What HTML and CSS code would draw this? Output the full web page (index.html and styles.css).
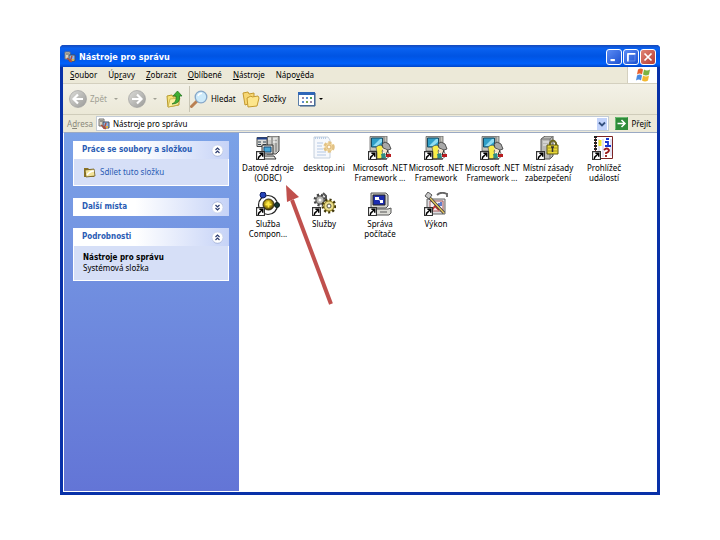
FILE: index.html
```html
<!DOCTYPE html>
<html lang="cs">
  <head>
    <meta charset="UTF-8">
    <meta name="viewport" content="width=device-width, initial-scale=1">
    <title>Nástroje pro správu</title>
    <link rel="stylesheet" href="styles.css">
  </head>
  <body>

    <!-- shared icons -->
    <svg class="defs" width="0" height="0" aria-hidden="true">
      <defs>
        <linearGradient id="gray" x1="0" y1="0" x2="1" y2="1">
          <stop offset="0" stop-color="#dcdcd8"/><stop offset="1" stop-color="#9a9a98"/>
        </linearGradient>
        <radialGradient id="gold" cx=".45" cy=".4" r=".6">
          <stop offset="0" stop-color="#fff45c"/><stop offset=".5" stop-color="#b59a10"/><stop offset="1" stop-color="#3a3208"/>
        </radialGradient>
        <symbol id="shortcut" viewBox="0 0 8 8">
          <path d="M.5 .5h7v7h-7z" fill="#fff" stroke="#333"/>
          <path d="M3 2h3v3M6 2L4 4Q2 5 2 7" fill="none" stroke="#000" stroke-width="1.3"/>
        </symbol>
        <symbol id="tools" viewBox="0 0 12 12">
          <path d="M1 1h5v7H1z" fill="#d8d4c4" stroke="#777"/>
          <path d="M2 3h3" stroke="#555"/>
          <path d="M5 4h6v6H5z" fill="#8fb4e8" stroke="#45505f"/>
          <path d="M3 7l5 4M8 5l-2 6" stroke="#b0503c" stroke-width="1.5"/>
          <path d="M8 8h2v2H8z" fill="#e4b23a"/>
        </symbol>
        <symbol id="net" viewBox="0 0 24 24">
          <path d="M2 .5h14l3-.5v13l-3 2H2z" fill="#c4c4bc" stroke="#555" stroke-width=".7"/>
          <path d="M16 1v13" stroke="#777"/>
          <path d="M3.500 2h11v9h-11z" fill="#2f9fc8" stroke="#174b62"/>
          <path d="M5 10l7-7h2v3l-5 4z" fill="#8fdcf2"/>
          <path d="M9 15h11l2 5-4 3H8z" fill="#fff" stroke="#333" stroke-width=".7"/>
          <path d="M8 11q5-4 8 1l-2 3 1 4-2 4H9V17z" fill="#f8ec48" stroke="#555" stroke-width=".7"/>
          <path d="M14 8l3-2 4 2 2 5-3 1-5-2z" fill="#a8a8a8" stroke="#333" stroke-width=".8"/>
          <path d="M14 12l5 2 1 4-4-1z" fill="#f6e4cc"/>
          <path d="M13 18l4-1 1 5-4 1z" fill="#2f8c84"/>
          <path d="M18 18h5v3h-5z" fill="#b81c20"/>
          <path d="M20 14l-2 5M9 23h10" stroke="#222"/>
          <use href="#shortcut" x="0" y="15" width="9" height="9"/>
        </symbol>
        <symbol id="chevrons" viewBox="0 0 13 13">
          <circle cx="6.500" cy="7" r="5.500" fill="#8b9cc8"/>
          <circle cx="6.500" cy="6.500" r="5.500" fill="#fff" stroke="#c4cfe8" stroke-width=".6"/>
          <path d="M4.500 6l2-2 2 2M4.500 9l2-2 2 2" fill="none" stroke="#2c3c70" stroke-width="1.200"/>
        </symbol>
      </defs>
    </svg>

    <main class="window">
      <header class="titlebar">
        <svg class="small-icon"><use href="#tools"/></svg>
        <h1>Nástroje pro správu</h1>
        <div class="controls">
          <button class="control" aria-label="Minimalizovat"><svg viewBox="0 0 16 16"><path d="M4 11.500h5" stroke="#fff" stroke-width="2.500"/></svg></button>
          <button class="control" aria-label="Maximalizovat"><svg viewBox="0 0 16 16"><path d="M4.500 13V4M4 4.500h9" fill="none" stroke="#fff" stroke-width="2"/><path d="M12.500 5v7.500H5" fill="none" stroke="#7ba0ee" stroke-width=".7"/></svg></button>
          <button class="control close" aria-label="Zavřít"><svg viewBox="0 0 16 16"><path d="M4 4l8 8M12 4l-8 8" stroke="#fff" stroke-width="2"/></svg></button>
        </div>
      </header>

      <nav class="menubar">
        <button><u>S</u>oubor</button>
        <button>Úp<u>r</u>avy</button>
        <button><u>Z</u>obrazit</button>
        <button><u>O</u>blíbené</button>
        <button><u>N</u>ástroje</button>
        <button>Nápo<u>v</u>ěda</button>
        <span class="flag">
          <svg viewBox="0 0 16 15">
            <path d="M3 2q3-2 5 0L7 7Q5 5 2 7z" fill="#e8602c"/>
            <path d="M9 2q3 2 6 0l-1 5q-3 2-6 0z" fill="#7cb342"/>
            <path d="M2 8q3-2 5 0l-1 5q-2-2-5 0z" fill="#4a8ae0"/>
            <path d="M8 8q3 2 6 0l-1 5q-3 2-6 0z" fill="#f2b830"/>
          </svg>
        </span>
      </nav>

      <div class="toolbar">
        <button class="back" disabled>
          <svg viewBox="0 0 18 18"><circle cx="9" cy="9" r="8.500" fill="url(#gray)" stroke="#999" stroke-width=".6"/><path d="M14 9H5M9 4.500L4.500 9 9 13.500" fill="none" stroke="#fff" stroke-width="2.200"/></svg>
          Zpět <i class="drop"></i>
        </button>
        <button class="forward" disabled aria-label="Vpřed">
          <svg viewBox="0 0 18 18"><circle cx="9" cy="9" r="8.500" fill="url(#gray)" stroke="#999" stroke-width=".6"/><path d="M4 9h9M9 4.500L13.500 9 9 13.500" fill="none" stroke="#fff" stroke-width="2.200"/></svg>
          <i class="drop"></i>
        </button>
        <button class="up" aria-label="Nahoru">
          <svg viewBox="0 0 18 18"><path d="M2 6l5-1 1 2 6-1v9L3 17z" fill="#f5e27a" stroke="#b79a2c"/><path d="M3 17l2-8 10-1-2 7z" fill="#fbf0a0" stroke="#c0a43c" stroke-width=".7"/><path d="M7 14q5-2 4-8H8l4.500-5L17 6h-2.500q1 8-7.500 8z" fill="#3fae32" stroke="#20701c" stroke-width=".7"/></svg>
        </button>
        <span class="divider"></span>
        <button class="search">
          <svg viewBox="0 0 18 18"><path d="M1.500 16.500L7 11" stroke="#b98052" stroke-width="3" stroke-linecap="round"/><circle cx="11" cy="7" r="5.800" fill="#cdeafa" stroke="#86a7c8" stroke-width="1.300"/><path d="M8 6q1-3 4-2.500" fill="none" stroke="#fff" stroke-width="1.500"/></svg>
          Hledat
        </button>
        <button class="folders">
          <svg viewBox="0 0 18 18"><path d="M1 3l5-1 1 2 5-1v9l-9 3z" fill="#f7d774" stroke="#c49a30"/><path d="M5 8l4-2 1 1 6-1 1 2-2 8-9 1z" fill="#fde68c" stroke="#c49a30"/></svg>
          Složky
        </button>
        <button class="views" aria-label="Zobrazení">
          <svg viewBox="0 0 18 16"><path d="M.5 1.500h16v13H.5z" fill="#fff" stroke="#5b7ea8"/><path d="M0 1h17v3H0z" fill="#2f66b8"/><path d="M17 2v13H2" fill="none" stroke="#355b88"/><path d="M4 6h2v2H4zM12 10h2v2h-2z" fill="#9c8aa8"/><path d="M8 6h2v2H8zM4 10h2v2H4z" fill="#5d8ed0"/><path d="M12 6h2v2h-2z" fill="#4b9e55"/><path d="M8 10h2v2H8z" fill="#7ba650"/></svg>
          <i class="drop"></i>
        </button>
      </div>

      <form class="address">
        <label for="path">A<u>d</u>resa</label>
        <div class="path-box">
          <svg class="small-icon"><use href="#tools"/></svg>
          <input id="path" type="text" value="Nástroje pro správu">
          <button type="button" class="pick" aria-label="Otevřít seznam"><svg viewBox="0 0 10 12"><path d="M2 4.500L5 7.500l3-3" fill="none" stroke="#34507e" stroke-width="1.800"/></svg></button>
        </div>
        <button type="button" class="go">
          <svg viewBox="0 0 13 13"><path d="M0 0h13v13H0z" fill="#2f8c3a"/><path d="M.5 12.500V.5h12" fill="none" stroke="#6fbc74"/><path d="M2.500 6.500h7M6.500 3l3.500 3.500L6.500 10" fill="none" stroke="#fff" stroke-width="1.500"/></svg>
          Přejít
        </button>
      </form>

      <div class="content">
        <aside class="sidebar">
          <section class="panel">
            <div class="panel-head">
              <h2>Práce se soubory a složkou</h2>
              <button aria-label="Sbalit"><svg><use href="#chevrons"/></svg></button>
            </div>
            <div class="panel-body tasks">
              <a href="#">
                <svg viewBox="0 0 13 12"><path d="M1 2h4l1 1h5v8H1z" fill="#8c7424"/><path d="M2 4l9-1 1 7-9 1z" fill="#f2e39a" stroke="#6d5a1e" stroke-width=".8"/><path d="M4 9q3-4 7-4" stroke="#fff" stroke-width="1.500" fill="none"/></svg>
                Sdílet tuto složku
              </a>
            </div>
          </section>

          <section class="panel">
            <div class="panel-head">
              <h2>Další místa</h2>
              <button class="flip" aria-label="Rozbalit"><svg><use href="#chevrons"/></svg></button>
            </div>
          </section>

          <section class="panel">
            <div class="panel-head">
              <h2>Podrobnosti</h2>
              <button aria-label="Sbalit"><svg><use href="#chevrons"/></svg></button>
            </div>
            <div class="panel-body">
              <strong>Nástroje pro správu</strong>
              <p>Systémová složka</p>
            </div>
          </section>
        </aside>

        <section class="files">
          <a class="file" href="#">
            <svg viewBox="0 0 24 24">
              <path d="M11 1l3-1h9v15l-3 3h-9z" fill="#c9c9c5" stroke="#444"/>
              <path d="M16 1v15M20 3v13" stroke="#777"/>
              <path d="M12 3h3M17 3h4M17 6h4" stroke="#fff"/>
              <path d="M1 1.500h10v9H1z" fill="#dcdcd8" stroke="#444"/>
              <path d="M1 2.500h10" stroke="#20408c" stroke-width="2"/><path d="M2 6h3M7 6h3M2 8.500h3M7 8.500h3" stroke="#345"/>
              <path d="M6 9h11v9H6z" fill="#d8d8d4" stroke="#333"/>
              <path d="M8 11h7v5H8z" fill="#46a8d8" stroke="#164a78"/>
              <path d="M7 20h11l2 3H7z" fill="#e8e8e4" stroke="#333"/>
              <use href="#shortcut" x="0" y="15" width="9" height="9"/>
            </svg>
            <span>Datové zdroje (ODBC)</span>
          </a>
          <a class="file" href="#">
            <svg viewBox="0 0 24 24">
              <path d="M2 1h14l2 3v18H2z" fill="#f6f8fc" stroke="#b8c4d4" stroke-width=".8"/>
              <path d="M3 2h12" stroke="#b8cce4" stroke-width="2" stroke-dasharray="1 1"/>
              <path d="M5 7h6M5 10h5M5 13h6M5 16h9M5 19h9" stroke="#b4c8e4"/>
              <circle cx="17" cy="11" r="4.500" fill="#f3d9a2" stroke="#e2c284" stroke-width="2.500" stroke-dasharray="3 2"/>
              <circle cx="17" cy="11" r="2" fill="#fff8e8" stroke="#d8b070"/>
            </svg>
            <span>desktop.ini</span>
          </a>
          <a class="file" href="#">
            <svg><use href="#net"/></svg>
            <span>Microsoft .NET Framework ...</span>
          </a>
          <a class="file" href="#">
            <svg><use href="#net"/></svg>
            <span>Microsoft .NET Framework</span>
          </a>
          <a class="file" href="#">
            <svg><use href="#net"/></svg>
            <span>Microsoft .NET Framework ...</span>
          </a>
          <a class="file" href="#">
            <svg viewBox="0 0 24 24">
              <path d="M5 3l4-3h8v20l-3 3H5z" fill="#b9b9b5" stroke="#555"/>
              <path d="M5 3h9v20M14 3l3-3" fill="none" stroke="#777"/>
              <path d="M7 6h6M7 9h6" stroke="#eee"/>
              <path d="M14 10V7q3-5 6 0v3" fill="none" stroke="#6c6620" stroke-width="2"/>
              <path d="M11 9h11v9H11z" fill="#e8d838" stroke="#5a5410"/>
              <path d="M12 12h10M12 15h10" stroke="#a89820"/><path d="M15 11h3M16.500 11v5" stroke="#333" stroke-width="1.500"/>
              <use href="#shortcut" x="0" y="15" width="9" height="9"/>
            </svg>
            <span>Místní zásady zabezpečení</span>
          </a>
          <a class="file" href="#">
            <svg viewBox="0 0 24 24">
              <path d="M3.500 .5h17v22h-17z" fill="#fff" stroke="#7c2424"/>
              <path d="M3.500 0v24" stroke="#222" stroke-width="3" stroke-dasharray="2 1"/>
              <path d="M7 3v16M11 3v18M19 3v17" stroke="#c8c8e8"/>
              <path d="M8 4v6" stroke="#f0e428" stroke-width="3"/>
              <path d="M14 3h3M13 6h3v4M13 10h6" fill="none" stroke="#1838d0" stroke-width="1.800"/>
              <path d="M12 14q3-3 5 0 0 2-3 3v1M14 19v2" fill="none" stroke="#981818" stroke-width="1.800"/>
              <use href="#shortcut" x="0" y="15" width="9" height="9"/>
            </svg>
            <span>Prohlížeč událostí</span>
          </a>
          <a class="file" href="#">
            <svg viewBox="0 0 24 24">
              <circle cx="12" cy="13" r="9.500" fill="#fff" stroke="#222" stroke-width="1.200"/>
              <circle cx="12.500" cy="12.500" r="5.500" fill="url(#gold)" stroke="#332c0c"/>
              <path d="M12.500 9.500v6M9.500 12.500h6" stroke="#ffe840" stroke-width="1.500"/>
              <circle cx="7" cy="3" r="3" fill="#2444b8" stroke="#101c60"/>
              <circle cx="21" cy="13" r="2.500" fill="#163830" stroke="#0c1c18"/>
              <use href="#shortcut" x="0" y="15" width="9" height="9"/>
            </svg>
            <span>Služba Compon...</span>
          </a>
          <a class="file" href="#">
            <svg viewBox="0 0 24 24">
              <circle cx="8" cy="8" r="5" fill="#a8a8a4" stroke="#444" stroke-width="3" stroke-dasharray="2 2"/>
              <circle cx="8" cy="8" r="4" fill="#b8b8b4" stroke="#666"/><circle cx="8" cy="8" r="1.500" fill="#fff"/>
              <path d="M11 1l3 3v4" fill="none" stroke="#555" stroke-width="2"/>
              <circle cx="17" cy="14" r="6" fill="#eee08a" stroke="#40380c" stroke-width="3" stroke-dasharray="2 2"/>
              <circle cx="17" cy="14" r="5" fill="#e9dc8c" stroke="#8c7c24"/><circle cx="17" cy="14" r="2" fill="#fff" stroke="#554"/>
              <use href="#shortcut" x="0" y="15" width="9" height="9"/>
            </svg>
            <span>Služby</span>
          </a>
          <a class="file" href="#">
            <svg viewBox="0 0 24 24">
              <path d="M3 1h15l2 2v11l-2 2H3z" fill="#d2d2cc" stroke="#555"/>
              <path d="M5 3h12v10H5z" fill="#1c2cb0" stroke="#222"/>
              <path d="M7 5h4v3H7zM12 8h3v3h-3z" fill="#fff"/><path d="M10 7l3 2" stroke="#fff"/>
              <path d="M2 17h18l3-1v5l-2 2H2z" fill="#dcdcd6" stroke="#555"/><path d="M12 20h7" stroke="#555"/>
              <use href="#shortcut" x="0" y="15" width="9" height="9"/>
            </svg>
            <span>Správa počítače</span>
          </a>
          <a class="file" href="#">
            <svg viewBox="0 0 24 24">
              <path d="M3 7h18v15H3z" fill="#dcdce0" stroke="#666"/>
              <path d="M6 9h13v10H6z" fill="#f6eef2" stroke="#a85858"/>
              <path d="M15 17V11M17 14v-4" stroke="#3058c0" stroke-width="1.500"/>
              <path d="M8 18l3-4 4 4" fill="none" stroke="#c03030" stroke-width="1.800"/>
              <path d="M3 3l17 18" stroke="#333" stroke-width="3"/><path d="M6 6l14 15" stroke="#e8c860" stroke-width="1.500"/>
              <path d="M1 4l3-4 4 3-3 4z" fill="#c8c8c8" stroke="#555"/>
              <path d="M13 3q4-4 10-1M23 1v4" fill="none" stroke="#666" stroke-width="1.800"/>
              <use href="#shortcut" x="0" y="15" width="9" height="9"/>
            </svg>
            <span>Výkon</span>
          </a>

          <svg class="pointer" viewBox="0 0 52 124" aria-hidden="true">
            <path d="M47 121L8 17" stroke="#c0504d" stroke-width="4"/>
            <path d="M2 2l13 12-12 5z" fill="#c0504d"/>
          </svg>
        </section>
      </div>
    </main>
  </body>
</html>
```
FILE: styles.css
```css
* {
  margin: 0;
  padding: 0;
  box-sizing: border-box;
}

body {
  min-height: 100vh;
  display: flex;
  padding: 45px 60px;
  background: #fff;
  color: #000;
  font-family: "Noto Sans", "DejaVu Sans", sans-serif;
  font-size: 8px;
  line-height: 10px;
}

button,
input {
  font: inherit;
  color: inherit;
  border: none;
  background: none;
}

button {
  display: flex;
  align-items: center;
}

a {
  color: inherit;
  text-decoration: none;
}

.defs {
  position: absolute;
}

.small-icon {
  width: 12px;
  height: 12px;
  flex: none;
}

.window {
  flex: 1;
  display: flex;
  flex-direction: column;
  border: 3px solid #0831a8;
  border-top: none;
  border-radius: 4px 4px 0 0;
  background: #ece9d8;
}

/* title bar */
.titlebar {
  display: flex;
  align-items: center;
  gap: 3px;
  height: 22px;
  margin: 0 -3px;
  padding: 3px 4px 2px;
  border-radius: 4px 4px 0 0;
  background: linear-gradient(#1648b8, #0a62f0 15%, #0054e3 50%, #0060fa 85%, #0044c8);
  color: #fff;
}

h1 {
  flex: 1;
  font-family: "DejaVu Sans Condensed", "DejaVu Sans", sans-serif;
  font-size: 9px;
  line-height: 12px;
}

.controls {
  display: flex;
  gap: 1px;
}

.control {
  width: 16px;
  height: 16px;
  border: 1px solid #fff;
  border-radius: 3px;
  background: linear-gradient(135deg, #5c8cf4, #1c50d0);
}

.control svg {
  width: 14px;
  height: 14px;
}

.close {
  background: linear-gradient(135deg, #e08474, #b83c34);
}

/* menu */
.menubar {
  display: flex;
  align-items: center;
  gap: 11px;
  height: 17px;
  padding-left: 7px;
  border-bottom: 1px solid #d4d0bf;
}

.flag {
  display: flex;
  justify-content: center;
  align-self: stretch;
  width: 30px;
  margin-left: auto;
  border-left: 1px solid #d4d0bf;
  background: #fff;
}

.flag svg {
  width: 16px;
  height: 16px;
}

/* toolbar */
.toolbar {
  display: flex;
  align-items: center;
  gap: 8px;
  height: 31px;
  padding-left: 6px;
  border-bottom: 1px solid #cfccba;
  background: linear-gradient(#f3f1e7, #ebe8d7);
}

.toolbar button {
  gap: 3px;
}

.toolbar svg {
  width: 18px;
  height: 18px;
}

.toolbar button:disabled {
  color: #a09f94;
}

.toolbar .back {
  margin-right: 2px;
}

.drop {
  width: 0;
  margin-left: 4px;
  border: 2px solid transparent;
  border-top-color: currentColor;
  border-bottom: none;
}

.views .drop {
  margin-left: 0;
}

.divider {
  height: 26px;
  border-left: 1px solid #c8c5b4;
  margin: 0 -8px 0 -2px;
}

.toolbar .search {
  margin-right: -2px;
}

.toolbar .views {
  margin-left: 4px;
}

/* address bar */
.address {
  display: flex;
  align-items: center;
  gap: 6px;
  height: 17px;
  padding: 1px 6px 1px 4px;
}

.address label {
  color: #8b897c;
}

.path-box {
  flex: 1;
  display: flex;
  align-items: center;
  gap: 3px;
  height: 15px;
  margin-left: -3px;
  padding: 0 1px;
  border: 1px solid #c3ccd6;
  background: #fff;
}

.path-box input {
  flex: 1;
  min-width: 0;
  height: 12px;
}

.pick {
  width: 10px;
  height: 12px;
  background: #c2d3fb;
}

.go {
  gap: 3px;
}

.go svg {
  width: 13px;
  height: 13px;
}

/* content */
.content {
  flex: 1;
  display: flex;
  border: 1px solid #fff;
  border-top-color: #9aa9c4;
  border-right: none;
  background: #fff;
}

.sidebar {
  width: 175px;
  padding: 8px 10px 8px 9px;
  background: linear-gradient(#7ba2e7, #6375d6);
}

.panel {
  margin-bottom: 12px;
}

.panel-head {
  display: flex;
  align-items: center;
  justify-content: space-between;
  height: 18px;
  padding: 0 5px 0 9px;
  background: linear-gradient(90deg, #fff 40%, #c6d3f7);
}

.panel-head svg {
  width: 13px;
  height: 13px;
}

.flip svg {
  transform: rotate(180deg);
}

h2,
.panel-body strong {
  display: block;
  font-family: "DejaVu Sans Condensed", "DejaVu Sans", sans-serif;
  font-size: 8px;
  line-height: 10px;
}

h2 {
  color: #2a5cb4;
}

.panel-body {
  padding: 7px 9px;
  border: 1px solid #fff;
  border-top: none;
  background: #d6dff7;
}

.tasks a {
  display: flex;
  align-items: center;
  gap: 4px;
  height: 12px;
  color: #2a5cb4;
}

.tasks svg {
  width: 13px;
  height: 12px;
}

.files {
  position: relative;
  flex: 1;
  display: grid;
  grid-template-columns: repeat(auto-fill, 56px);
  grid-auto-rows: 56px;
  padding: 3px 0 0 1px;
}

.file {
  display: flex;
  flex-direction: column;
  align-items: center;
  gap: 3px;
  text-align: center;
}

.file svg {
  width: 24px;
  height: 24px;
  flex: none;
}

.file span {
  width: 56px;
}

/* arrow drawn over the icons */
.pointer {
  position: absolute;
  left: 45px;
  top: 50px;
  width: 52px;
  height: 124px;
}
```
